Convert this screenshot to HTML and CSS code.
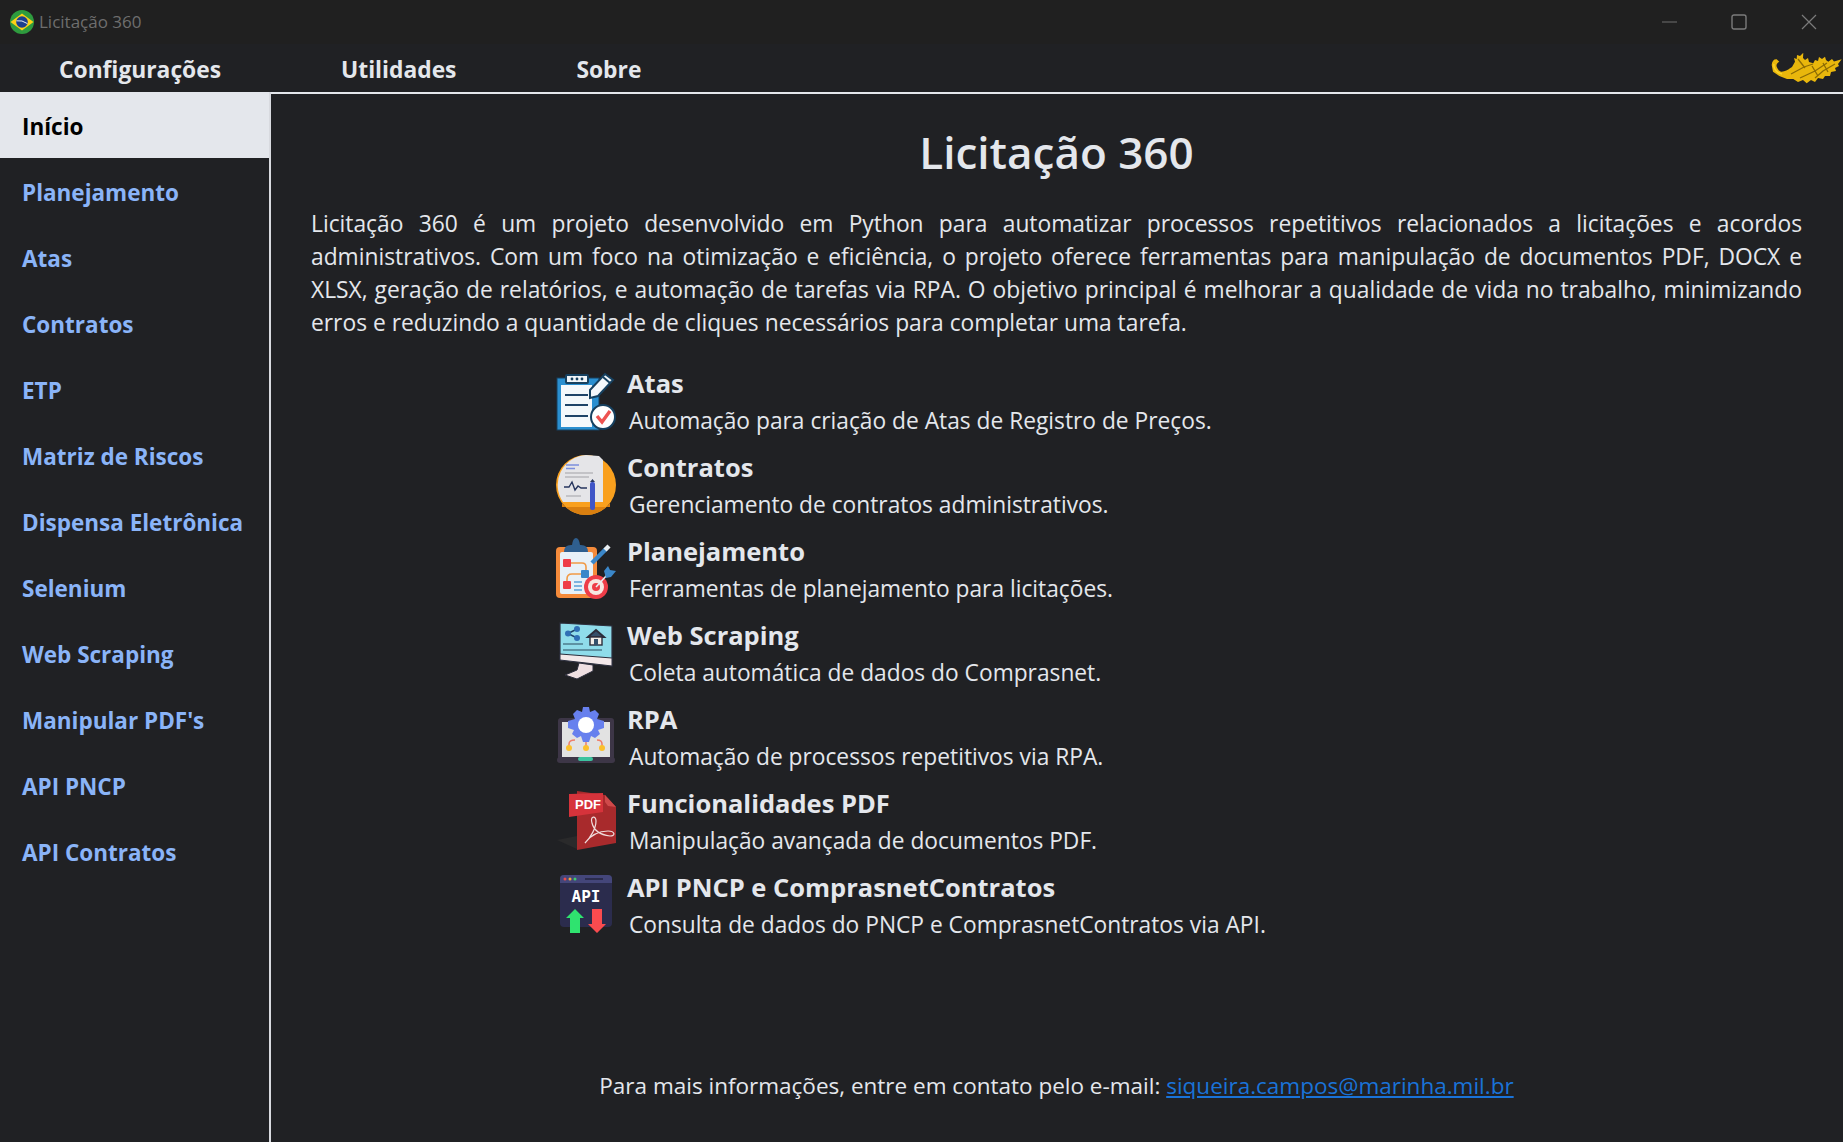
FILE: index.html
```html
<!DOCTYPE html>
<html lang="pt-BR">
<head>
  <meta charset="UTF-8" />
  <title>Licitação 360</title>
  <link rel="stylesheet" href="styles.css">
</head>
<body>
<div class="window">
  <header class="titlebar">
    <svg class="flag" viewBox="0 0 24 24">
      <circle cx="12" cy="12" r="12" fill="#2e9b3e"/>
      <path d="M0.5 12 L12 3.5 L23.5 12 L12 20.5 Z" fill="#fcd116"/>
      <circle cx="12" cy="12" r="5.8" fill="#1c3f8f"/>
      <path d="M6.5 10.8 Q12 9.8 17.4 13.6" stroke="#e8edf2" stroke-width="1" fill="none"/>
    </svg>
    <span class="app-name">Licitação 360</span>
    <div class="win-buttons">
      <svg class="win-btn" viewBox="0 0 16 16"><path d="M1 8 H16" stroke="#6f6f6f" stroke-width="1"/></svg>
      <svg class="win-btn" viewBox="0 0 16 16"><rect x="1" y="1" width="14" height="14" rx="2" fill="none" stroke="#7b7b7b" stroke-width="1.4"/></svg>
      <svg class="win-btn" viewBox="0 0 16 16"><path d="M1 1 L15 15 M15 1 L1 15" stroke="#7b7b7b" stroke-width="1.2"/></svg>
    </div>
  </header>

  <nav class="menubar">
    <a class="menu-item">Configurações</a>
    <a class="menu-item">Utilidades</a>
    <a class="menu-item">Sobre</a>
    <svg class="emblem" viewBox="0 0 72 34">
      <path d="M0.7 14 C1 10 3 8 5.7 8.3 L8.3 10.7 C6 12 5 14 5.7 15.7 C7 19 9 21 10.7 20.7 C14 20.5 17 19 19 17.3 L21 16 L24 10.7 L23 7 L25.7 8 L26 4 L29 5 L32.3 1.7 L32 7 L34 9 L37 7 L38 11 L42.3 12.3 L44 9 L47 10 L48 6 L51 8 L54 5.7 L55 9 L57.3 10.7 L61 8 L63 10.5 L70.7 8.3 L67 13 L68 15 L64 17 L65 20 L60 21 L59 25 L54 25 L52 28 L47 27 L44 31 L40 29 L35.700 32.300 L32 29 L27 31 L22.300 28 L16 28 L8.300 25 L2 20.700 Z" fill="#e9b70c"/>
      <path d="M20 23 L33 16 L42 13 M29 27 L44 20 L56 12 M44 27 L52 20 L64 13 M27 8 L34 17 M41 15 L47 25 M52 12 L57 21" stroke="#8d6c05" stroke-width="1.300" fill="none"/>
      <path d="M3 13 C2 18 6 22 11 23" stroke="#fbd52a" stroke-width="1.500" fill="none"/>
    </svg>
  </nav>

  <div class="main">
    <aside class="sidebar">
      <a class="side-item active">Início</a>
      <a class="side-item">Planejamento</a>
      <a class="side-item">Atas</a>
      <a class="side-item">Contratos</a>
      <a class="side-item">ETP</a>
      <a class="side-item">Matriz de Riscos</a>
      <a class="side-item">Dispensa Eletrônica</a>
      <a class="side-item">Selenium</a>
      <a class="side-item">Web Scraping</a>
      <a class="side-item">Manipular PDF's</a>
      <a class="side-item">API PNCP</a>
      <a class="side-item">API Contratos</a>
    </aside>

    <main class="content">
      <h1 class="page-title">Licitação 360</h1>
      <p class="intro">Licitação 360 é um projeto desenvolvido em Python para automatizar processos repetitivos relacionados a licitações e acordos administrativos. Com um foco na otimização e eficiência, o projeto oferece ferramentas para manipulação de documentos PDF, DOCX e XLSX, geração de relatórios, e automação de tarefas via RPA. O objetivo principal é melhorar a qualidade de vida no trabalho, minimizando erros e reduzindo a quantidade de cliques necessários para completar uma tarefa.</p>

      <ul class="features">
        <li class="feature">
          <svg class="feature-icon" viewBox="0 0 62 62">
            <rect x="2" y="8" width="42" height="52" fill="#2a8fd0" stroke="#16405f" stroke-width="1"/>
            <rect x="6" y="15" width="31" height="42" fill="#f4f8fb"/>
            <rect x="11" y="5" width="22" height="8" rx="1" fill="#f0f4f7" stroke="#16405f" stroke-width="2"/>
            <circle cx="17" cy="9" r="1.4" fill="#16405f"/><circle cx="22" cy="9" r="1.4" fill="#16405f"/><circle cx="27" cy="9" r="1.4" fill="#16405f"/>
            <path d="M10 25 H33 M10 35 H33 M10 46 H33" stroke="#1f4468" stroke-width="2.2"/>
            <path d="M35 20 L50 4 L58 10 L43 26 L35 28 Z" fill="#f4f8fb" stroke="#16405f" stroke-width="2"/>
            <path d="M48 7 L55 13" stroke="#16405f" stroke-width="2"/>
            <circle cx="48" cy="47" r="12" fill="#fff" stroke="#16405f" stroke-width="2"/>
            <path d="M42 46 L47 52 L55 41" stroke="#ee5350" stroke-width="3.4" fill="none"/>
          </svg>
          <div class="feature-text">
            <h2 class="feature-title">Atas</h2>
            <p class="feature-desc">Automação para criação de Atas de Registro de Preços.</p>
          </div>
        </li>
        <li class="feature">
          <svg class="feature-icon" viewBox="0 0 62 62">
            <circle cx="31" cy="31" r="30" fill="#f9a01e"/>
            <path d="M7 49 A30 30 0 0 0 55 49 V53 H7 Z" fill="#d97f10"/>
            <path d="M8 48 A30 30 0 0 1 31 1 L44 2 L48 6 L48 48 Z" fill="#e5e5e8"/>
            <path d="M11 11 H24 M11 14.500 H20" stroke="#7c8fdc" stroke-width="1.4"/>
            <path d="M10 19 H38 M10 23 H34 M11 42 H26" stroke="#b8b8bc" stroke-width="1.3"/>
            <path d="M9 33 H14 L17 28 L20 36 L23 32 L26 34 H32" stroke="#27365f" stroke-width="1.4" fill="none"/>
            <rect x="35" y="28" width="5" height="28" rx="2" fill="#3f55c7"/>
            <path d="M35 28 L37.500 25 L40 28 Z" fill="#27365f"/>
          </svg>
          <div class="feature-text">
            <h2 class="feature-title">Contratos</h2>
            <p class="feature-desc">Gerenciamento de contratos administrativos.</p>
          </div>
        </li>
        <li class="feature">
          <svg class="feature-icon" viewBox="0 0 62 62">
            <rect x="1" y="9" width="41" height="51" rx="4" fill="#f58b3b"/>
            <rect x="5" y="14" width="33" height="42" rx="2" fill="#e8f1f8"/>
            <path d="M9 14 Q9 7 16 7 H17 Q18 0 21 0 Q24 0 25 7 H26 Q33 7 33 14 Z" fill="#2f5f8f"/>
            <path d="M12 25 H27 Q31 25 31 29 V32 M12 46 V41 Q12 36 17 36 H27" stroke="#f19a46" stroke-width="1.6" fill="none"/>
            <rect x="8" y="21" width="8" height="8" rx="1" fill="#ee3d48"/>
            <rect x="26" y="32" width="8" height="8" rx="1" fill="#3b87c9"/>
            <rect x="8" y="43" width="8" height="8" rx="1" fill="#ee3d48"/>
            <path d="M19 44 H27 M19 48 H27 M19 52 H27" stroke="#5aa0d8" stroke-width="1.6"/>
            <path d="M37 25 L51 11" stroke="#3b87c9" stroke-width="4.5"/>
            <path d="M50 12 L54 8" stroke="#e9eef2" stroke-width="4.500"/>
            <circle cx="41" cy="49" r="12" fill="#ee3d48"/>
            <circle cx="41" cy="49" r="8" fill="#f7e7e2"/>
            <circle cx="41" cy="49" r="4" fill="#ee3d48"/>
            <path d="M41 49 L52 37" stroke="#e9eef2" stroke-width="1.6"/>
            <path d="M49 33 L53 28 L55 32 L61 33 L56 39 L51 40 Z" fill="#3b87c9"/>
          </svg>
          <div class="feature-text">
            <h2 class="feature-title">Planejamento</h2>
            <p class="feature-desc">Ferramentas de planejamento para licitações.</p>
          </div>
        </li>
        <li class="feature">
          <svg class="feature-icon" viewBox="0 0 62 62">
            <path d="M5 1 L57 4 V44 L5 38 Z" fill="#8fdcea" stroke="#2c2e3c" stroke-width="1.2"/>
            <path d="M5 32 L57 36 V44 L5 38 Z" fill="#f4e9ea" stroke="#2c2e3c" stroke-width="1"/>
            <path d="M24 41 L38 43 V49 L22 57 L10 53 L22 48 Z" fill="#efe0e2" stroke="#2c2e3c" stroke-width="1"/>
            <path d="M8 22 H28 M8 28 H47" stroke="#2c4b5c" stroke-width="1.2"/>
            <path d="M13 11.500 L22 7 M13 11.500 L22 16" stroke="#1f4468" stroke-width="1.4"/>
            <circle cx="13" cy="11.500" r="3" fill="#2f6fb5"/><circle cx="22" cy="7" r="3" fill="#2f6fb5"/><circle cx="22" cy="16" r="3" fill="#2f6fb5"/>
            <path d="M33 15 L41 8 L49 15 Z" fill="#35506b" stroke="#2c2e3c" stroke-width="2"/>
            <rect x="35" y="15" width="12" height="8" fill="#f3eee8" stroke="#2c2e3c" stroke-width="1.4"/>
            <rect x="39" y="17" width="4" height="6" fill="#35506b"/>
          </svg>
          <div class="feature-text">
            <h2 class="feature-title">Web Scraping</h2>
            <p class="feature-desc">Coleta automática de dados do Comprasnet.</p>
          </div>
        </li>
        <li class="feature">
          <svg class="feature-icon" viewBox="0 0 62 62">
            <rect x="3" y="12" width="56" height="42" rx="3" fill="#3d3647"/>
            <rect x="7" y="16" width="48" height="35" fill="#e2e2e2"/>
            <rect x="2" y="51" width="58" height="6" rx="3" fill="#3d3647"/>
            <rect x="23" y="51" width="15" height="4" rx="2" fill="#3cc39f"/>
            <path d="M14 41 V38 Q14 34 20 34 M31 41 V34 M47 41 V38 Q47 34 42 34" stroke="#ee7e6a" stroke-width="1.500" fill="none"/>
            <circle cx="14" cy="42" r="3" fill="#fbc02d"/><circle cx="31" cy="42" r="3" fill="#fbc02d"/><circle cx="47" cy="42" r="3" fill="#fbc02d"/>
            <path d="M28 1 H34 L35 6 L40 4 L44 8 L42 13 L49 15 V22 L43 24 L45 28 L40 32 L36 30 L34 36 H28 L26 30 L22 32 L17 28 L19 24 L13 22 V15 L20 13 L18 8 L22 4 L27 6 Z" fill="#6780ee"/>
            <circle cx="31" cy="19" r="8" fill="#fff"/>
          </svg>
          <div class="feature-text">
            <h2 class="feature-title">RPA</h2>
            <p class="feature-desc">Automação de processos repetitivos via RPA.</p>
          </div>
        </li>
        <li class="feature">
          <svg class="feature-icon" viewBox="0 0 62 62">
            <path d="M2 50 L22 46 V59 Z" fill="#2a2a2b"/>
            <path d="M22 1 L50 5 L61 17 V53 L22 60 Z" fill="#a82a2c"/>
            <path d="M50 5 L61 17 L53 16 L50 12 Z" fill="#cf4a4a"/>
            <path d="M14 4 L48 3 L48 22 L14 27 Z" fill="#d6333b"/>
            <text x="20" y="19" class="pdf-label">PDF</text>
            <path d="M30 53 C36 47 41 38 41 31 C41 25 35 26 37 33 C39 41 47 45 55 46 C61 46 60 41 53 41 C44 41 36 45 30 53 Z" fill="none" stroke="#f0dcdc" stroke-width="1.200"/>
          </svg>
          <div class="feature-text">
            <h2 class="feature-title">Funcionalidades PDF</h2>
            <p class="feature-desc">Manipulação avançada de documentos PDF.</p>
          </div>
        </li>
        <li class="feature">
          <svg class="feature-icon" viewBox="0 0 62 62">
            <rect x="5" y="1" width="52" height="52" rx="4" fill="#2b2c4d"/>
            <path d="M5 9 V5 Q5 1 9 1 H53 Q57 1 57 5 V9 Z" fill="#44467a"/>
            <circle cx="10" cy="5" r="1.500" fill="#ee4b4b"/><circle cx="15" cy="5" r="1.500" fill="#f2a93b"/><circle cx="20" cy="5" r="1.500" fill="#3ecb6e"/>
            <rect x="30" y="4" width="18" height="2" fill="#2b2c4d"/>
            <text x="31" y="28" class="api-label">API</text>
            <path d="M20 35 L29 44 H25 V59 H15 V44 H11 Z" fill="#2fe36f"/>
            <path d="M37 35 H47 V50 H51 L42 59 L33 50 H37 Z" fill="#fa4b4f"/>
          </svg>
          <div class="feature-text">
            <h2 class="feature-title">API PNCP e ComprasnetContratos</h2>
            <p class="feature-desc">Consulta de dados do PNCP e ComprasnetContratos via API.</p>
          </div>
        </li>
      </ul>

      <p class="contact">Para mais informações, entre em contato pelo e-mail: <a class="contact-link">siqueira.campos@marinha.mil.br</a></p>
    </main>
  </div>
</div>
</body>
</html>
```

FILE: styles.css
```css
* {
  box-sizing: border-box;
}
html, body {
  margin: 0;
  height: 100%;
}
body {
  font-family: "Open Sans", "Noto Sans", sans-serif;
  background: #202124;
  color: #e4e7ec;
  overflow: hidden;
}
.window {
  display: flex;
  flex-direction: column;
  height: 1142px;
}
.titlebar {
  display: flex;
  align-items: center;
  height: 44px;
  padding-left: 10px;
  background: #202020;
}
.flag {
  width: 24px;
  height: 24px;
}
.app-name {
  margin: 0 0 2px 5px;
  font-size: 17px;
  color: #6e6e6e;
}
.win-buttons {
  display: flex;
  align-items: center;
  gap: 54px;
  margin-left: auto;
  padding-right: 26px;
}
.win-btn {
  width: 16px;
  height: 16px;
}
.menubar {
  display: flex;
  align-items: center;
  gap: 120px;
  height: 50px;
  padding: 3px 0 0 59px;
  background: #202124;
  border-bottom: 2px solid #e4e7ec;
  position: relative;
}
.menu-item {
  font-size: 22.8px;
  font-weight: 700;
  color: #e4e7ec;
}
.emblem {
  position: absolute;
  right: 0;
  top: 7px;
  width: 72px;
  height: 34px;
}
.main {
  display: flex;
  flex: 1;
  min-height: 0;
}
.sidebar {
  display: flex;
  flex-direction: column;
  width: 271px;
  margin-top: -2px;
  border-right: 2px solid #d8dadf;
  background: #202124;
  position: relative;
  z-index: 1;
}
.side-item {
  display: flex;
  align-items: center;
  height: 66px;
  padding: 3px 0 0 22px;
  font-size: 22.5px;
  font-weight: 700;
  color: #8ab4f8;
}
.side-item.active {
  background: #e4e7ec;
  color: #000;
}
.content {
  display: flex;
  flex-direction: column;
  flex: 1;
  padding: 28px 41px 0 40px;
}
.page-title {
  margin: 0;
  font-size: 44px;
  font-weight: 600;
  line-height: 60px;
  text-align: center;
}
.intro {
  margin: 25px 0 0;
  font-size: 22.8px;
  line-height: 33px;
  text-align: justify;
}
.features {
  list-style: none;
  margin: 20px 0 0;
  padding: 0 0 0 244px;
}
.feature {
  display: flex;
  align-items: center;
  height: 84px;
}
.feature-icon {
  flex: none;
  width: 62px;
  height: 62px;
}
.feature-text {
  margin-left: 10px;
  padding-top: 2px;
}
.feature-title {
  margin: 0;
  font-size: 25.5px;
  font-weight: 700;
  line-height: 36px;
}
.feature-desc {
  margin: 2px 0 0 2px;
  font-size: 22.75px;
  line-height: 36px;
}
.pdf-label {
  font-family: "Liberation Sans", sans-serif;
  font-size: 13px;
  font-weight: 700;
  fill: #fff;
}
.api-label {
  font-family: "DejaVu Sans Mono", monospace;
  font-size: 16px;
  font-weight: 700;
  fill: #fff;
  text-anchor: middle;
}
.contact {
  margin: 121px 0 0;
  font-size: 22.5px;
  line-height: 36px;
  text-align: center;
}
.contact-link {
  color: #1a73d8;
  text-decoration: underline;
}
```
